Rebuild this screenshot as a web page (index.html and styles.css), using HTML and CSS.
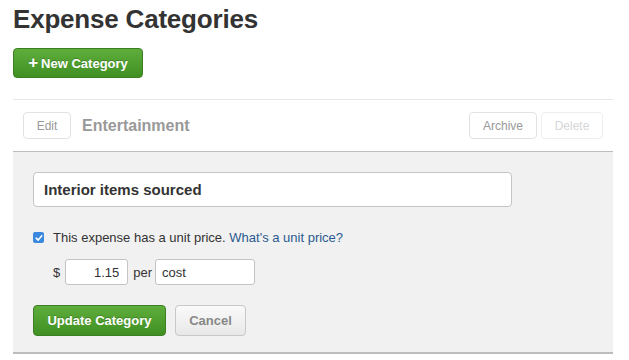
FILE: index.html
```html
<!DOCTYPE html>
<html>
<head>
<meta charset="utf-8">
<link rel="stylesheet" href="styles.css">
</head>
<body>
<div class="page">
  <h1 class="title">Expense Categories</h1>
  <button class="btn btn-green btn-new"><span class="plus">+</span> New Category</button>
  <div class="category">
    <div class="cat-head">
      <button class="btn btn-light btn-small">Edit</button>
      <span class="cat-name">Entertainment</span>
      <div class="cat-actions">
        <button class="btn btn-light btn-small">Archive</button>
        <button class="btn btn-light btn-small btn-disabled">Delete</button>
      </div>
    </div>
    <div class="cat-body">
      <input class="name-input" type="text" value="Interior items sourced">
      <label class="check-row">
        <span class="checkbox"><svg width="8" height="8" viewBox="0 0 8 8"><path d="M1.2 4.2 L3.2 6.1 L6.8 1.8" fill="none" stroke="#fff" stroke-width="1.6" stroke-linecap="round" stroke-linejoin="round"/></svg></span>
        <span>This expense has a unit price. <a class="link" href="#">What's a unit price?</a></span>
      </label>
      <div class="unit-row">
        <span>$</span>
        <input class="price-input" type="text" value="1.15">
        <span class="per">per</span>
        <input class="unit-input" type="text" value="cost">
      </div>
      <div class="actions">
        <button class="btn btn-green btn-update">Update Category</button>
        <button class="btn btn-cancel">Cancel</button>
      </div>
    </div>
  </div>
</div>
</body>
</html>
```
FILE: styles.css
```css
* { box-sizing: border-box; }
html, body { margin: 0; padding: 0; background: #fff; }
body { font-family: "Liberation Sans", Arial, sans-serif; color: #333; }
.page { padding: 4px 16px 0 13px; width: 629px; }
.title {
  font-size: 26px; font-weight: bold; line-height: 30px; margin: 0; color: #333;
  letter-spacing: -0.2px;
}
.btn {
  font-family: "Liberation Sans", Arial, sans-serif;
  border-radius: 4px; cursor: pointer; display: inline-flex; align-items: center; justify-content: center;
  padding: 0;
}
.btn-green {
  background: linear-gradient(#5fae3c, #3f8f23);
  border: 1px solid #3a7f22;
  color: #fff; font-weight: bold; font-size: 13px;
  text-shadow: 0 -1px 0 rgba(0,0,0,0.2);
}
.btn-new { margin-top: 14px; width: 130px; height: 30px; }
.plus { font-size: 17px; font-weight: bold; margin-right: 3px; line-height: 1; position: relative; top: -1px; }
.category { margin-top: 21px; width: 600px; border-top: 1px solid #e6e6e6; }
.cat-head {
  display: flex; align-items: center; height: 52px; padding: 0 10px;
  border-bottom: 1px solid #bdbdbd;
}
.btn-light {
  background: #fff; border: 1px solid #e2e2e2; color: #999; font-size: 12px; height: 27px;
}
.btn-small { padding: 0 9px; }
.cat-head > .btn-small:first-child { width: 48px; }
.btn-disabled { color: #d6d6d6; border-color: #eeeeee; }
.cat-name { margin-left: 11px; font-size: 16px; font-weight: bold; color: #999; }
.cat-actions { margin-left: auto; display: flex; gap: 4px; }
.cat-actions .btn-small:first-child { width: 68px; }
.cat-actions .btn-small:last-child { width: 62px; }
.cat-body {
  background: #f1f1f1; padding: 20px 20px 18px; border-bottom: 2px solid #bdbdbd;
  height: 202px;
}
.name-input {
  display: block; width: 479px; height: 35px; border: 1px solid #c4c4c4; border-radius: 4px;
  background: #fff; font-family: "Liberation Sans", Arial, sans-serif; font-size: 15px; font-weight: bold;
  color: #333; padding: 0 10px; margin: 0; outline: none;
}
.check-row { display: flex; align-items: center; margin-top: 23px; font-size: 13px; color: #333; }
.checkbox {
  width: 11px; height: 11px; border-radius: 2px; background: #3b88e0; display: inline-flex;
  align-items: center; justify-content: center; margin-right: 9px;
}
.link { color: #2b5a8f; text-decoration: none; }
.unit-row { display: flex; align-items: center; margin-top: 14px; padding-left: 20px; font-size: 13px; color: #333; }
.unit-row input {
  height: 26px; border: 1px solid #c4c4c4; border-radius: 3px; background: #fff;
  font-family: "Liberation Sans", Arial, sans-serif; font-size: 13px; color: #333; margin: 0; outline: none;
}
.price-input { width: 63px; text-align: right; padding: 0 8px; margin-left: 5px !important; }
.per { margin: 0 3px 0 5px; }
.unit-input { width: 100px; padding: 0 6px; }
.actions { display: flex; gap: 9px; margin-top: 20px; }
.btn-update { width: 133px; height: 31px; font-size: 13px; }
.btn-cancel {
  width: 71px; height: 31px; background: linear-gradient(#fafafa, #e8e8e8); border: 1px solid #c8c8c8;
  color: #888; font-weight: bold; font-size: 13px;
}
```
